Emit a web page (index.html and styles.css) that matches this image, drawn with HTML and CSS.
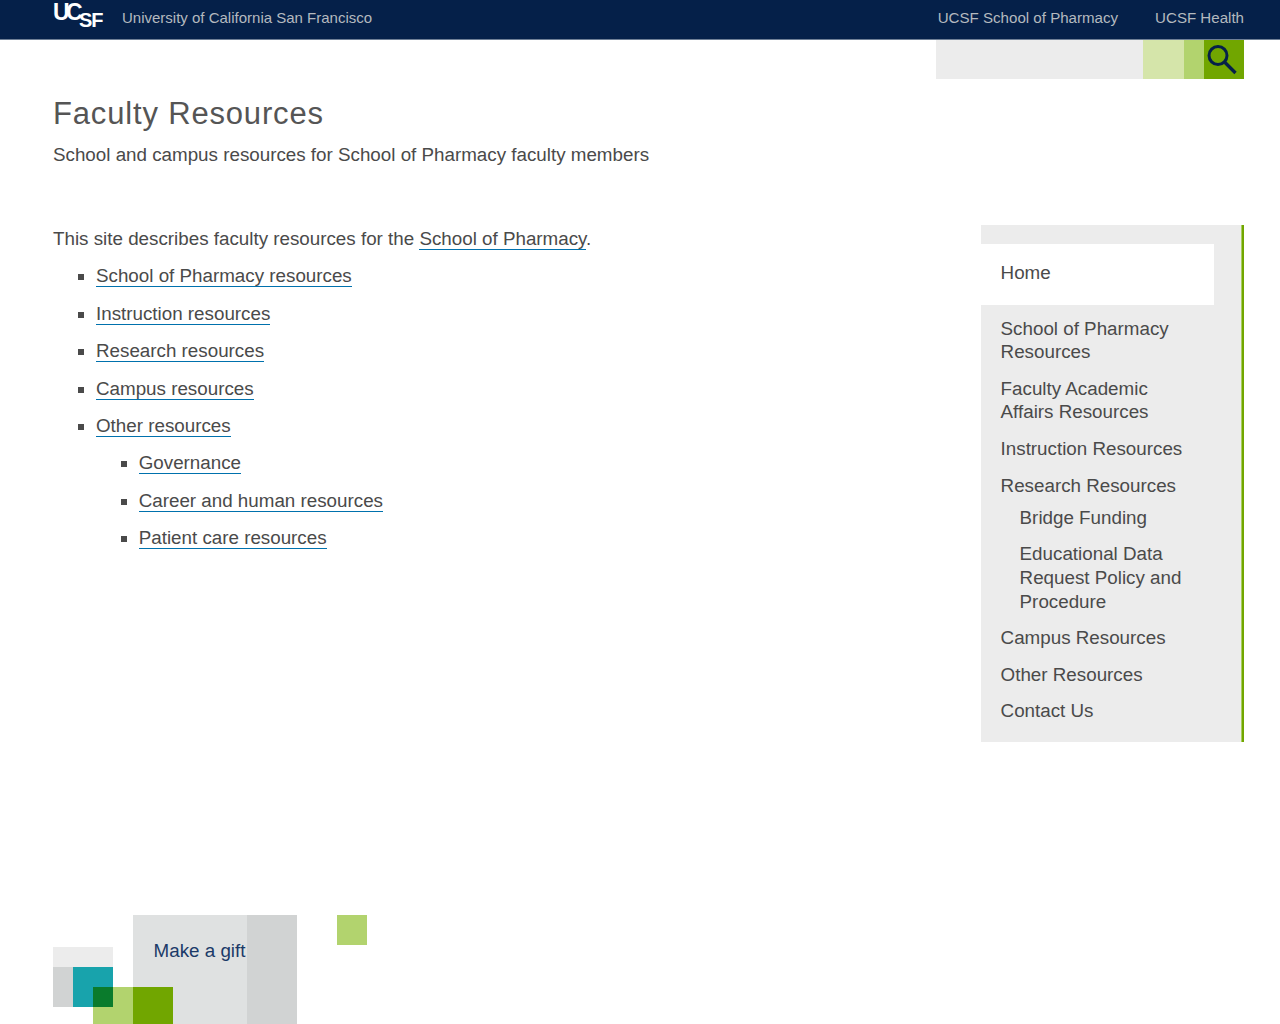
FILE: index.html
```html
<!DOCTYPE html>
<html lang="en">
<head>
<meta charset="utf-8">
<title>Faculty Resources</title>
<link rel="stylesheet" href="styles.css">
</head>
<body>
<header class="topbar">
  <div class="brand">
    <a class="logo" href="#"><span class="logo-uc">UC</span><span class="logo-sf">SF</span></a>
    <span class="brand-name">University of California San Francisco</span>
  </div>
  <nav class="toplinks">
    <a href="#">UCSF School of Pharmacy</a>
    <a href="#">UCSF Health</a>
  </nav>
</header>
<div class="searchrow">
  <div class="search">
    <div class="search-field"></div>
    <div class="search-a"></div>
    <div class="search-b"></div>
    <div class="search-btn">
      <svg width="32" height="34" viewBox="0 0 32 34" aria-hidden="true"><circle cx="11" cy="12.5" r="9" fill="none" stroke="#052049" stroke-width="3"/><path d="M18 19.5 L28.5 30" stroke="#052049" stroke-width="3.4" fill="none"/></svg>
    </div>
  </div>
</div>
<section class="intro">
  <h1>Faculty Resources</h1>
  <p>School and campus resources for School of Pharmacy faculty members</p>
</section>
<main class="columns">
  <article class="content">
    <p>This site describes faculty resources for the <a href="#">School of Pharmacy</a>.</p>
    <ul class="list">
      <li><a href="#">School of Pharmacy resources</a></li>
      <li><a href="#">Instruction resources</a></li>
      <li><a href="#">Research resources</a></li>
      <li><a href="#">Campus resources</a></li>
      <li><a href="#">Other resources</a>
        <ul class="list">
          <li><a href="#">Governance</a></li>
          <li><a href="#">Career and human resources</a></li>
          <li><a href="#">Patient care resources</a></li>
        </ul>
      </li>
    </ul>
  </article>
  <aside class="sidebar">
    <div class="side-home">Home</div>
    <ul class="side-nav">
      <li>School of Pharmacy Resources</li>
      <li>Faculty Academic Affairs Resources</li>
      <li>Instruction Resources</li>
      <li>Research Resources
        <ul class="side-sub">
          <li>Bridge Funding</li>
          <li>Educational Data Request Policy and Procedure</li>
        </ul>
      </li>
      <li>Campus Resources</li>
      <li>Other Resources</li>
      <li>Contact Us</li>
    </ul>
  </aside>
</main>
<footer class="blocks">
  <div class="b b-gift">Make a gift</div>
  <div class="b b-giftside"></div>
  <div class="b b-square"></div>
  <div class="b b-pale"></div>
  <div class="b b-grey"></div>
  <div class="b b-teal"></div>
  <div class="b b-dark"></div>
  <div class="b b-lime"></div>
  <div class="b b-green"></div>
</footer>
</body>
</html>
```
FILE: styles.css
```css
* { box-sizing: border-box; }
html, body { margin: 0; padding: 0; height: 1024px; overflow: hidden; background: #fff; }
body { font-family: "Liberation Sans", Arial, sans-serif; font-size: 18.8px; line-height: 24px; color: #4a4a4a; }
a { color: inherit; text-decoration: none; }

.topbar { height: 40px; background: #052049; border-bottom: 1px solid #6f7f96; padding: 0 36px 4px 53px; display: flex; justify-content: space-between; align-items: center; font-size: 15px; color: #b4b9bf; }
.brand { display: flex; align-items: center; gap: 19px; }
.logo { display: block; width: 50px; height: 35px; position: relative; color: #fff; font-weight: bold; }
.logo-uc { position: absolute; left: 0; top: 1px; font-size: 23px; line-height: 23px; letter-spacing: -3.5px; }
.logo-sf { position: absolute; left: 26px; top: 10px; font-size: 20px; line-height: 20px; letter-spacing: -1px; }
.toplinks { display: flex; gap: 37px; font-size: 15.1px; }

.searchrow { display: flex; justify-content: flex-end; padding-right: 36px; }
.search { display: flex; height: 39px; }
.search-field { width: 207px; background: #ececec; }
.search-a { width: 41px; background: #d5e5aa; }
.search-b { width: 20px; background: #b2d36e; }
.search-btn { width: 40px; background: #71a600; padding: 3px 0 0 3px; }
.search-btn svg { display: block; }

.intro { padding: 15px 53px 0; }
.intro h1 { margin: 0; font-size: 31px; font-weight: normal; line-height: 40px; letter-spacing: 0.83px; color: #555; }
.intro p { margin: 9px 0 0; }

.columns { display: flex; justify-content: space-between; padding: 58px 36px 0 53px; height: 575px; }
.content p { margin: 2px 0 0; }
.list { list-style: square; margin: 0; padding: 0 0 0 43px; }
.list .list { padding-left: 42.7px; }
.list li { margin-top: 13.4px; }
.list a, .content p a { border-bottom: 1px solid #0071ad; }

.sidebar { width: 263px; height: 517px; background: #ececec; border-right: 2px solid #71a600; box-shadow: inset -1px 0 0 #a9cd5f; padding-top: 19px; }
.side-home { width: 233px; height: 61px; background: #fff; padding: 17px 19.6px; }
.side-nav { list-style: none; margin: 11.7px 0 0; padding: 0 50px 0 19.6px; line-height: 23.6px; }
.side-nav > li { margin-bottom: 13px; }
.side-sub { list-style: none; margin: 9px 0 0; padding: 0 0 0 19px; }
.side-sub li { margin-bottom: 12.5px; }
.side-sub li:last-child { margin-bottom: 0; }

.blocks { position: fixed; left: 53px; top: 915px; display: grid; grid-template-columns: 20px 20px 20px 20px 40px 74px 50px 40px 30px; grid-template-rows: 30px 2px 20px 20px 20px 17px; width: 314px; }
.b-gift { grid-column: 5 / 7; grid-row: 1 / 7; background: #dfe1e1; padding: 23.6px 0 0 20.6px; color: #1b3a68; line-height: 24px; white-space: nowrap; }
.b-giftside { grid-column: 7; grid-row: 1 / 7; background: #d1d3d3; }
.b-square { grid-column: 9; grid-row: 1; background: #b2d36e; }
.b-pale { grid-column: 1 / 4; grid-row: 3; background: #ececec; }
.b-grey { grid-column: 1; grid-row: 4 / 6; background: #d1d3d3; }
.b-teal { grid-column: 2 / 4; grid-row: 4 / 6; background: #18a3ac; }
.b-dark { grid-column: 3; grid-row: 5; background: #0a7b2c; z-index: 1; }
.b-lime { grid-column: 3 / 5; grid-row: 5 / 7; background: #b2d36e; }
.b-green { grid-column: 5; grid-row: 5 / 7; background: #71a600; z-index: 1; }
```
